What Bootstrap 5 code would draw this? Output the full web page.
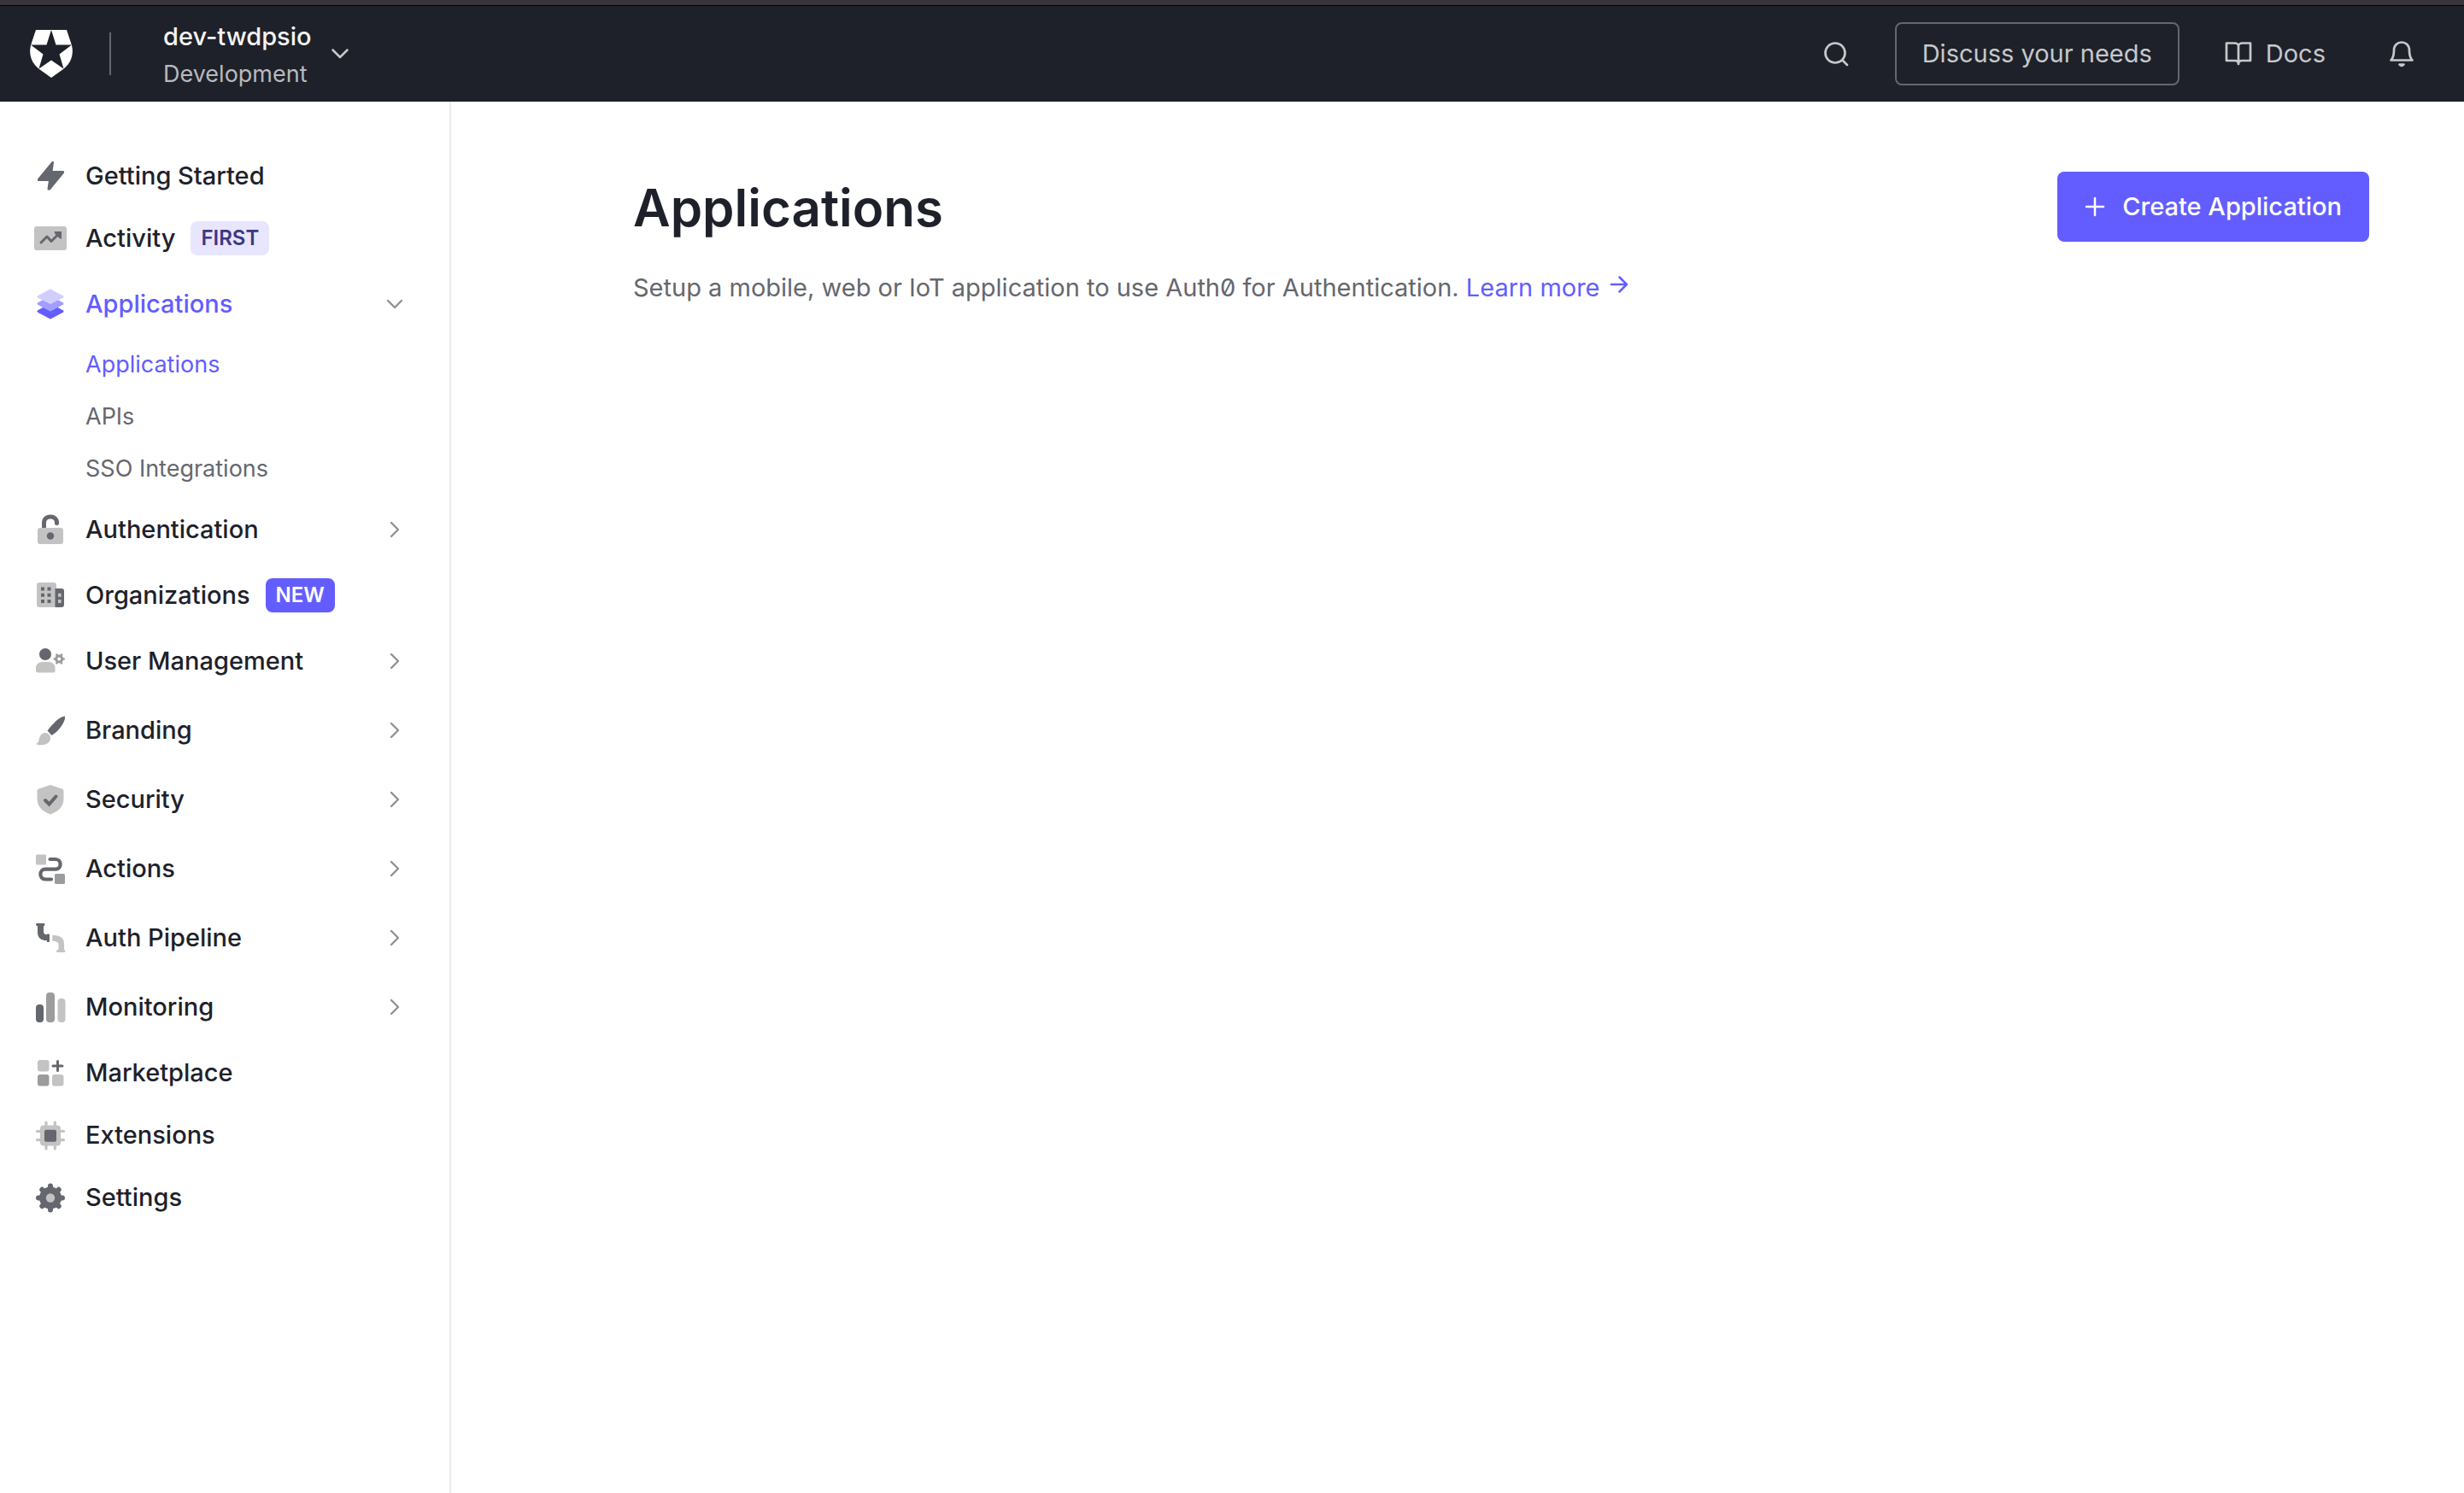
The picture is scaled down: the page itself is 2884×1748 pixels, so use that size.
<!DOCTYPE html>
<html lang="en">
<head>
<meta charset="utf-8">
<meta name="viewport" content="width=device-width, initial-scale=1">
<title>Applications</title>
<link rel="stylesheet" href="https://cdn.jsdelivr.net/npm/bootstrap@5.3.0/dist/css/bootstrap.min.css">
<style>
:root{--ink:#1e212a;--muted:#65676e;--brand:#635dff;--mid:#9b9c9e;--pale:#c3c3c3}
body{font-family:Inter,"Liberation Sans",sans-serif;font-size:29px;line-height:44px;color:var(--ink);background:#fff;font-feature-settings:"zero"}
svg{display:block;flex:none;overflow:visible}
.stroke-icon{fill:none;stroke:currentColor;stroke-linecap:round;stroke-linejoin:round}
.topbar{background:var(--ink);border-top:6px solid #38343a;box-shadow:inset 0 1px #000;height:119px;padding:1px 57px 0 34px;color:#c7c8ca}
.divider{width:2px;height:50px;background:#65676e;margin-left:42px;margin-right:61px}
.tenant{font:inherit;color:inherit;gap:23px}
.tenant-text{padding-top:4px}
.tenant-name{color:#f4f4f5;font-weight:500}
.tenant-env{font-size:27px;color:#b9babd}
.tools{gap:53px}
.tools .btn{font-size:29px;line-height:44px}
.talk-btn{--bs-btn-color:#c7c8ca;--bs-btn-border-color:#65676e;--bs-btn-border-width:2px;--bs-btn-border-radius:8px;--bs-btn-padding-x:30px;--bs-btn-padding-y:13px}
.docs-link{color:inherit;gap:16px}
.bell-btn{margin-left:20px}
.sidebar{width:528px;border-right:2px solid #ebebec;padding:50px 52px 50px 39px}
.nav-row,.nav-row.btn{min-height:73px;color:var(--ink);font-size:29px;line-height:44px;font-weight:500;gap:21px;width:100%;text-align:left}
.nav-row.tall{min-height:81px}
.nav-row:hover,.nav-row.current,.sub-row.current{color:var(--brand)}
.chev{color:#8f9196;margin-left:auto}
.sub-row{height:61px;padding-left:61px;font-size:27px;color:var(--muted)}
.pill{font-size:24px;font-weight:600;line-height:40px;padding:0 12px;margin-left:-3px;border-radius:8px}
.pill-first{background:#e8e6ff;--bs-badge-color:#3f3783}
.pill-new{background:var(--brand);--bs-badge-color:#fff}
.page{padding:82px 111px 82px 213px}
.page-title{font-size:60px;line-height:84px;font-weight:600}
.create-btn{--bs-btn-bg:var(--brand);--bs-btn-hover-bg:#4f49e0;--bs-btn-color:#fff;--bs-btn-hover-color:#fff;--bs-btn-border-width:0;--bs-btn-border-radius:8px;--bs-btn-padding-x:32px;--bs-btn-padding-y:19px;font-size:29px;line-height:44px;font-weight:500;gap:20px}
.intro{margin:30px 0 0;color:var(--muted)}
.intro a{color:var(--brand)}
.arrow{display:inline-block;margin-left:10px;vertical-align:2px}
</style>
<script src="https://cdn.jsdelivr.net/npm/bootstrap@5.3.0/dist/js/bootstrap.bundle.min.js"></script>
</head>
<body class="d-flex flex-column min-vh-100">
<svg width="0" height="0" class="position-absolute" aria-hidden="true">
<symbol id="right" viewBox="0 0 24 24"><path d="M8 4l8 8-8 8" fill="none" stroke="currentColor" stroke-width="2.4" stroke-linecap="round" stroke-linejoin="round"/></symbol>
<symbol id="down" viewBox="0 0 24 24"><path d="M4 8l8 8 8-8" fill="none" stroke="currentColor" stroke-width="2.4" stroke-linecap="round" stroke-linejoin="round"/></symbol>
</svg>

<header class="topbar d-flex align-items-center justify-content-between">
  <div class="d-flex align-items-center">
    <a href="#" aria-label="Home"><svg width="52" height="56" viewBox="0 0 52 56"><path fill="#fff" d="M8 0H44L50 18C53 30 48 40 40 46L26 56L12 46C4 40 -1 30 2 18Z"/><path fill="#1e212a" d="M26 0L31.5 17.500H50L35.500 28.500L40.500 45.500L26 35.500L11.500 45.500L16.500 28.500L2 17.500H20.500Z"/></svg></a>
    <span class="divider"></span>
    <button class="tenant btn border-0 p-0 d-flex align-items-center text-start">
      <span class="tenant-text"><span class="tenant-name d-block">dev-twdpsio</span><span class="tenant-env d-block">Development</span></span>
      <svg class="stroke-icon" width="20" height="12" viewBox="0 0 20 12" stroke-width="2.500"><path d="M1.500 1.500L10 10L18.500 1.500"/></svg>
    </button>
  </div>
  <div class="tools d-flex align-items-center">
    <button class="btn border-0 p-0 text-reset" aria-label="Search"><svg class="stroke-icon" width="32" height="32" viewBox="0 0 32 32" stroke-width="2.700"><circle cx="15" cy="15" r="11.500"/><path d="M23.500 23.500L29 29"/></svg></button>
    <button class="btn talk-btn">Discuss your needs</button>
    <a href="#" class="docs-link d-flex align-items-center text-decoration-none"><svg class="stroke-icon" width="32" height="32" viewBox="0 0 32 32" stroke-width="2.700"><path d="M16 7C16 5 14 3.500 11.500 3.500H2V24H12C14.500 24 16 25.500 16 28C16 25.500 17.500 24 20 24H30V3.500H20.500C18 3.500 16 5 16 7V28"/></svg>Docs</a>
    <button class="bell-btn btn border-0 p-0 text-reset" aria-label="Notifications"><svg class="stroke-icon" width="32" height="32" viewBox="0 0 32 32" stroke-width="2.700"><path d="M3.500 23.500C6 21 7 18 7 12C7 6 11 2.500 16 2.500S25 6 25 12C25 18 26 21 28.500 23.500Z"/><path d="M13.500 28.500Q16 31.500 18.500 28.500Z" fill="currentColor"/></svg></button>
  </div>
</header>

<div class="d-flex flex-grow-1">
<nav class="sidebar flex-shrink-0" aria-label="Main">
<ul class="list-unstyled mb-0">
<li><a href="#" class="nav-row d-flex align-items-center text-decoration-none"><svg width="40" height="40" viewBox="0 0 40 40"><path fill="#65676e" stroke="#65676e" stroke-width="2" stroke-linejoin="round" d="M22.500 4L6 24V25H19L17.500 35.500L19 35.500L35 16V15H21.500L23 4Z"/></svg>Getting Started</a></li>
<li><a href="#" class="nav-row d-flex align-items-center text-decoration-none"><svg width="40" height="40" viewBox="0 0 40 40"><rect x="1" y="6" width="38" height="28" rx="3" fill="#c3c3c3"/><path d="M9 25L16 18L21 23.500L30 14.500" fill="none" stroke="#65676e" stroke-width="3" stroke-linecap="round" stroke-linejoin="round"/><path d="M24.500 12H33V21L30 19.500L25.500 15Z" fill="#65676e"/></svg>Activity<span class="badge pill pill-first">FIRST</span></a></li>
<li><button class="nav-row tall current btn border-0 p-0 d-flex align-items-center" aria-expanded="true"><svg width="40" height="40" viewBox="0 0 40 40"><g stroke-width="3" stroke-linejoin="round"><path fill="#635dff" stroke="#635dff" d="M20 21L34 28.500L20 36L6 28.500Z"/><path fill="#a19eff" stroke="#a19eff" d="M20 12L34 19.500L20 27L6 19.500Z"/><path fill="#d0ceff" stroke="#d0ceff" d="M20 4L34 11.500L20 18.500L6 11.500Z"/></g></svg><span>Applications</span><svg class="chev" width="24" height="24"><use href="#down"/></svg></button>
  <ul class="list-unstyled">
    <li><a href="#" class="sub-row current d-flex align-items-center text-decoration-none">Applications</a></li>
    <li><a href="#" class="sub-row d-flex align-items-center text-decoration-none">APIs</a></li>
    <li><a href="#" class="sub-row d-flex align-items-center text-decoration-none">SSO Integrations</a></li>
  </ul></li>
<li><button class="nav-row tall btn border-0 p-0 d-flex align-items-center"><svg width="40" height="40" viewBox="0 0 40 40"><path d="M12.500 19V12C12.500 2.500 27.500 2.500 27.500 12V12.500" fill="none" stroke="#65676e" stroke-width="5" stroke-linecap="round"/><rect x="5" y="18" width="30" height="19" rx="3" fill="#c3c3c3"/><circle cx="20" cy="27.500" r="4.200" fill="#65676e"/></svg><span>Authentication</span><svg class="chev" width="24" height="24"><use href="#right"/></svg></button></li>
<li><a href="#" class="nav-row d-flex align-items-center text-decoration-none"><svg width="40" height="40" viewBox="0 0 40 40"><rect x="4" y="5" width="23" height="29" rx="3" fill="#c3c3c3"/><path fill="#65676e" d="M25.500 12H33Q36 12 36 15V31Q36 34 33 34H25.500ZM9 10.500h4v4h-4zM16.500 10.500h4v4h-4zM9 17.700h4v4h-4zM16.500 17.700h4v4h-4zM9 25h4v4h-4zM16.500 25h4v4h-4z"/><path fill="#c3c3c3" d="M29 17.700h3.600v4h-3.600zM29 25h3.600v4h-3.600z"/></svg>Organizations<span class="badge pill pill-new">NEW</span></a></li>
<li><button class="nav-row tall btn border-0 p-0 d-flex align-items-center"><svg width="40" height="40" viewBox="0 0 40 40"><circle cx="14" cy="12" r="7" fill="#65676e"/><path fill="#c3c3c3" d="M3 29Q3 21 11 21H17.500Q25.500 21 25.500 29V31Q25.500 33.500 23 33.500H5.500Q3 33.500 3 31Z"/><g stroke="#9b9c9e" fill="none" transform="translate(30.200 17.500)"><circle r="3.500" stroke-width="3"/><path stroke-width="2.600" stroke-linecap="round" d="M4-0H5.500M-4 0H-5.500M2 3.500L2.800 4.800M-2 3.500L-2.800 4.800M2-3.500L2.800-4.800M-2-3.500L-2.800-4.800"/></g></svg><span>User Management</span><svg class="chev" width="24" height="24"><use href="#right"/></svg></button></li>
<li><button class="nav-row tall btn border-0 p-0 d-flex align-items-center"><svg width="40" height="40" viewBox="0 0 40 40"><path fill="#65676e" d="M37 3.500C38 8 33 16 27 22L21.500 26L16.500 20.500C23 12 31 3.500 37 3.500Z"/><path fill="#c3c3c3" d="M14 23C18 23 20.500 26 20 30C19 36 13 38 5 37Q2.500 36.500 4.500 35C7 33.500 6 31 7.500 28Q9.500 23 14 23Z"/></svg><span>Branding</span><svg class="chev" width="24" height="24"><use href="#right"/></svg></button></li>
<li><button class="nav-row tall btn border-0 p-0 d-flex align-items-center"><svg width="40" height="40" viewBox="0 0 40 40"><path fill="#c3c3c3" d="M20 3L33.500 7.500Q35.500 8 35.500 10V19C35.500 29 29 34 20 37.500C11 34 4.500 29 4.500 19V10Q4.500 8 6.500 7.500Z"/><path d="M14 21L18.500 25.500L26.500 16.500" fill="none" stroke="#65676e" stroke-width="4" stroke-linecap="round"/></svg><span>Security</span><svg class="chev" width="24" height="24"><use href="#right"/></svg></button></li>
<li><button class="nav-row tall btn border-0 p-0 d-flex align-items-center"><svg width="40" height="40" viewBox="0 0 40 40"><rect x="3" y="3.500" width="12" height="12" rx="1.500" fill="#c3c3c3"/><rect x="25" y="26" width="12" height="12" rx="1.500" fill="#9b9c9e"/><path d="M19.500 9H26C33.500 9 33.500 20.700 26 20.700H14C6.500 20.700 6.500 32.500 14 32.500H21" fill="none" stroke="#65676e" stroke-width="4.200" stroke-linecap="round"/></svg><span>Actions</span><svg class="chev" width="24" height="24"><use href="#right"/></svg></button></li>
<li><button class="nav-row tall btn border-0 p-0 d-flex align-items-center"><svg width="40" height="40" viewBox="0 0 40 40"><path fill="#65676e" d="M4 3H12.500Q13.500 3 13.500 4.500T12 6.200V13Q12 16 16 16.200V15.500H18Q19 15.500 19 16.500V24Q19 25 18 25H16V23.300C8.500 23.300 5 19 5 14V6.200Q3 6 3 4.500T4 3Z"/><path fill="#c3c3c3" d="M22.300 17C31 16.500 36 20 36 27V33.700Q37.300 34 37.300 35.500T36 37H28.500Q27 37 27 35.500T29.500 33.700V27Q29 24 22.300 23.500Z"/></svg><span>Auth Pipeline</span><svg class="chev" width="24" height="24"><use href="#right"/></svg></button></li>
<li><button class="nav-row tall btn border-0 p-0 d-flex align-items-center"><svg width="40" height="40" viewBox="0 0 40 40"><rect x="3" y="17" width="9" height="21" rx="4" fill="#65676e"/><rect x="15" y="3" width="10" height="35" rx="4" fill="#9b9c9e"/><rect x="28.500" y="10" width="9" height="28" rx="4" fill="#c3c3c3"/></svg><span>Monitoring</span><svg class="chev" width="24" height="24"><use href="#right"/></svg></button></li>
<li><a href="#" class="nav-row d-flex align-items-center text-decoration-none"><svg width="40" height="40" viewBox="0 0 40 40"><rect x="5" y="5" width="13.500" height="13.500" rx="3" fill="#c3c3c3"/><rect x="5" y="22" width="13.500" height="13.500" rx="3" fill="#9b9c9e"/><rect x="22" y="22" width="13.500" height="13.500" rx="3" fill="#c3c3c3"/><path d="M28.500 6.500V17.500M23 12H34" stroke="#65676e" stroke-width="3" stroke-linecap="round"/></svg>Marketplace</a></li>
<li><a href="#" class="nav-row d-flex align-items-center text-decoration-none"><svg width="40" height="40" viewBox="0 0 40 40"><path d="M15 5V36M25.300 5V36M4.500 15.500H35.500M4.500 25.700H35.500" stroke="#c3c3c3" stroke-width="3.200" stroke-linecap="round"/><rect x="8" y="8.500" width="24" height="24" rx="4" fill="#c3c3c3"/><rect x="13" y="13.700" width="14" height="14" rx="2" fill="#65676e"/></svg>Extensions</a></li>
<li><a href="#" class="nav-row d-flex align-items-center text-decoration-none"><svg width="40" height="40" viewBox="0 0 40 40"><circle cx="20" cy="20.500" r="13" fill="#65676e"/><path d="M20 6.500V34.500M6 20.500H34M10.300 10.800L29.700 30.200M29.700 10.800L10.300 30.200" stroke="#65676e" stroke-width="6" stroke-linecap="round"/><circle cx="20" cy="20.500" r="5.200" fill="#c3c3c3"/></svg>Settings</a></li>
</ul>
</nav>

<main class="page flex-grow-1">
  <div class="d-flex justify-content-between align-items-start">
    <h1 class="page-title mb-0">Applications</h1>
    <button class="btn create-btn d-flex align-items-center"><svg class="stroke-icon" width="24" height="24" viewBox="0 0 24 24" stroke-width="2.500"><path d="M12 2V22M2 12H22"/></svg>Create Application</button>
  </div>
  <p class="intro">Setup a mobile, web or IoT application to use Auth0 for Authentication. <a href="#" class="text-decoration-none">Learn more<svg class="arrow stroke-icon" width="24" height="24" viewBox="0 0 24 24" stroke-width="2.500"><path d="M3 12H21M12.500 3.500L21 12L12.500 20.500"/></svg></a></p>
</main>
</div>
</body>
</html>
